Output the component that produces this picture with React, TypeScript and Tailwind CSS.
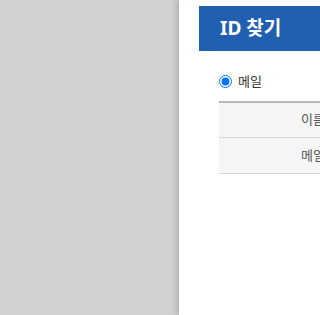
import { useState } from "react";

const rows = [
  { label: "이름", placeholder: "" },
  { label: "메일", placeholder: "" },
];

export default function App() {
  const [mode, setMode] = useState("mail");

  return (
    <div
      className="flex h-[315px] w-[320px] overflow-hidden bg-[#d1d1d1]"
      style={{ fontFamily: '"Noto Sans", "Noto Sans CJK KR", sans-serif' }}
    >
      <div className="w-[179px] shrink-0" />
      <div className="w-[520px] shrink-0 bg-white shadow-[-2px_0_6px_rgba(0,0,0,0.18)]">
        {/* Title bar */}
        <div className="ml-[20px] mt-[6px] flex h-[45px] items-center bg-[#2160b0] pl-[21px]">
          <h1 className="text-[19px] font-bold text-white">ID 찾기</h1>
        </div>

        {/* Search type */}
        <div className="ml-[40px] mt-[21px] flex items-center gap-[6px]">
          <input
            type="radio"
            name="type"
            checked={mode === "mail"}
            onChange={() => setMode("mail")}
            className="h-[13px] w-[13px]"
          />
          <label className="text-[13px] text-[#333]">메일</label>
        </div>

        {/* Form table */}
        <table className="ml-[40px] mt-[9px] w-[440px] border-t-2 border-[#b8b8b8] text-[13px]">
          <tbody>
            {rows.map((r) => (
              <tr key={r.label} className="h-[36px] border-b border-[#d6d6d6]">
                <th className="w-[120px] bg-[#f5f5f5] pr-[14px] text-right font-normal text-[#555]">
                  {r.label}
                </th>
                <td className="px-[10px]" />
              </tr>
            ))}
          </tbody>
        </table>
      </div>
    </div>
  );
}
